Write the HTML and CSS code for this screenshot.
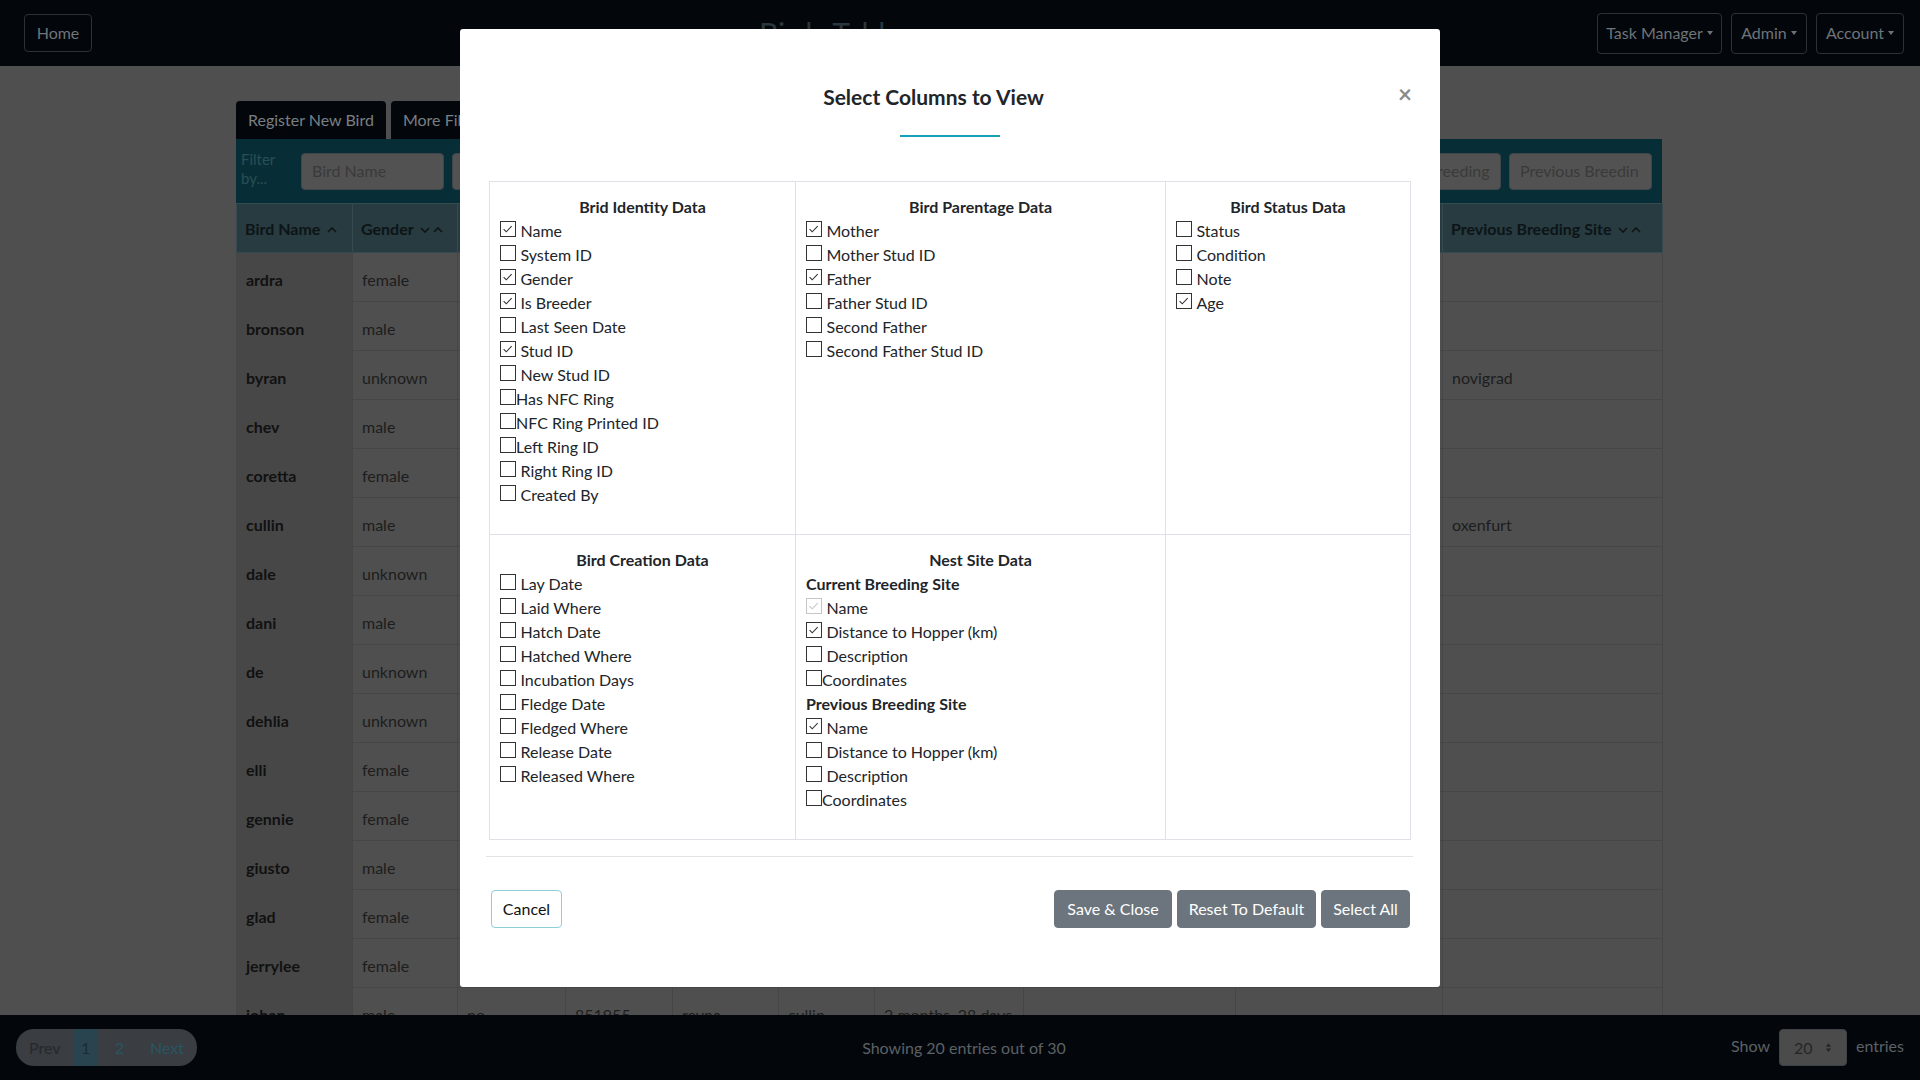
FILE: index.html
```html
<!DOCTYPE html>
<html lang="en">
<head>
<meta charset="utf-8">
<title>Birds Table</title>
<link rel="stylesheet" href="styles.css">
</head>
<body>
<header class="navbar">
  <button class="nav-btn home">Home</button>
  <div class="brand">Birds Table</div>
  <div class="nav-right">
    <button class="nav-btn w-task">Task Manager<span class="caret"></span></button>
    <button class="nav-btn w-admin">Admin<span class="caret"></span></button>
    <button class="nav-btn w-acct">Account<span class="caret"></span></button>
  </div>
</header>

<main class="main">
  <div class="tabs">
    <div class="tab">Register New Bird</div>
    <div class="tab">More Filters</div>
  </div>
  <div class="filters">
    <div class="filter-label">Filter by...</div>
    <div class="finput">Bird Name</div>
    <div class="finput">Gender</div>
    <div class="finput">Is Breeder</div>
    <div class="finput">Stud ID</div>
    <div class="finput">Mother</div>
    <div class="finput">Father</div>
    <div class="finput">Age</div>
    <div class="finput">Current Breeding</div>
    <div class="finput">Previous Breedin</div>
  </div>
  <table class="grid">
    <colgroup>
      <col style="width:116px"><col style="width:105px"><col style="width:108px"><col style="width:107px"><col style="width:106px"><col style="width:96px"><col style="width:149px"><col style="width:212px"><col style="width:207px"><col style="width:220px">
    </colgroup>
    <thead>
      <tr>
        <th>Bird Name <svg class="chev" viewBox="0 0 10 6"><path d="M1 5l4-4 4 4"/></svg></th>
        <th>Gender <svg class="chev" viewBox="0 0 10 6"><path d="M1 1l4 4 4-4"/></svg><svg class="chev" viewBox="0 0 10 6"><path d="M1 5l4-4 4 4"/></svg></th>
        <th>Is Breeder</th>
        <th>Stud ID</th>
        <th>Mother</th>
        <th>Father</th>
        <th>Age</th>
        <th>Current Breeding Site</th>
        <th>Distance to Hopper</th>
        <th>Previous Breeding Site <svg class="chev" viewBox="0 0 10 6"><path d="M1 1l4 4 4-4"/></svg><svg class="chev" viewBox="0 0 10 6"><path d="M1 5l4-4 4 4"/></svg></th>
      </tr>
    </thead>
    <tbody>
      <tr><td class="first">ardra</td><td>female</td><td></td><td></td><td></td><td></td><td></td><td></td><td></td><td></td></tr>
      <tr><td class="first">bronson</td><td>male</td><td></td><td></td><td></td><td></td><td></td><td></td><td></td><td></td></tr>
      <tr><td class="first">byran</td><td>unknown</td><td></td><td></td><td></td><td></td><td></td><td></td><td></td><td>novigrad</td></tr>
      <tr><td class="first">chev</td><td>male</td><td></td><td></td><td></td><td></td><td></td><td></td><td></td><td></td></tr>
      <tr><td class="first">coretta</td><td>female</td><td></td><td></td><td></td><td></td><td></td><td></td><td></td><td></td></tr>
      <tr><td class="first">cullin</td><td>male</td><td></td><td></td><td></td><td></td><td></td><td></td><td></td><td>oxenfurt</td></tr>
      <tr><td class="first">dale</td><td>unknown</td><td></td><td></td><td></td><td></td><td></td><td></td><td></td><td></td></tr>
      <tr><td class="first">dani</td><td>male</td><td></td><td></td><td></td><td></td><td></td><td></td><td></td><td></td></tr>
      <tr><td class="first">de</td><td>unknown</td><td></td><td></td><td></td><td></td><td></td><td></td><td></td><td></td></tr>
      <tr><td class="first">dehlia</td><td>unknown</td><td></td><td></td><td></td><td></td><td></td><td></td><td></td><td></td></tr>
      <tr><td class="first">elli</td><td>female</td><td></td><td></td><td></td><td></td><td></td><td></td><td></td><td></td></tr>
      <tr><td class="first">gennie</td><td>female</td><td></td><td></td><td></td><td></td><td></td><td></td><td></td><td></td></tr>
      <tr><td class="first">giusto</td><td>male</td><td></td><td></td><td></td><td></td><td></td><td></td><td></td><td></td></tr>
      <tr><td class="first">glad</td><td>female</td><td></td><td></td><td></td><td></td><td></td><td></td><td></td><td></td></tr>
      <tr><td class="first">jerrylee</td><td>female</td><td></td><td></td><td></td><td></td><td></td><td></td><td></td><td></td></tr>
      <tr><td class="first">johan</td><td>male</td><td>no</td><td>851955</td><td>reyna</td><td>cullin</td><td>2 months, 28 days</td><td></td><td></td><td></td></tr>
    </tbody>
  </table>
</main>

<footer class="footer">
  <div class="pager">
    <span class="pg dim">Prev</span>
    <span class="pg active">1</span>
    <span class="pg link two">2</span>
    <span class="pg link">Next</span>
  </div>
  <div class="showing">Showing 20 entries out of 30</div>
  <div class="per-page">
    <span>Show</span>
    <span class="sel">20 <svg class="updown" viewBox="0 0 8 12"><path d="M4 1l3 4H1z M4 11l3-4H1z"/></svg></span>
    <span>entries</span>
  </div>
</footer>

<div class="modal">
  <div class="m-head">
    <h5 class="m-title">Select Columns to View</h5>
    <button class="close">×</button>
  </div>
  <div class="m-underline"></div>

  <div class="cols">
    <div class="cell">
      <div class="c-head">Brid Identity Data</div>
      <div class="opt"><span class="cb on"><svg viewBox="0 0 16 16"><path d="M3 8.2l3 3 6.2-6.6"/></svg></span><span class="t">Name</span></div>
      <div class="opt"><span class="cb"></span><span class="t">System ID</span></div>
      <div class="opt"><span class="cb on"><svg viewBox="0 0 16 16"><path d="M3 8.2l3 3 6.2-6.6"/></svg></span><span class="t">Gender</span></div>
      <div class="opt"><span class="cb on"><svg viewBox="0 0 16 16"><path d="M3 8.2l3 3 6.2-6.6"/></svg></span><span class="t">Is Breeder</span></div>
      <div class="opt"><span class="cb"></span><span class="t">Last Seen Date</span></div>
      <div class="opt"><span class="cb on"><svg viewBox="0 0 16 16"><path d="M3 8.2l3 3 6.2-6.6"/></svg></span><span class="t">Stud ID</span></div>
      <div class="opt"><span class="cb"></span><span class="t">New Stud ID</span></div>
      <div class="opt tight"><span class="cb"></span><span class="t">Has NFC Ring</span></div>
      <div class="opt tight"><span class="cb"></span><span class="t">NFC Ring Printed ID</span></div>
      <div class="opt tight"><span class="cb"></span><span class="t">Left Ring ID</span></div>
      <div class="opt"><span class="cb"></span><span class="t">Right Ring ID</span></div>
      <div class="opt"><span class="cb"></span><span class="t">Created By</span></div>
    </div>
    <div class="cell">
      <div class="c-head">Bird Parentage Data</div>
      <div class="opt"><span class="cb on"><svg viewBox="0 0 16 16"><path d="M3 8.2l3 3 6.2-6.6"/></svg></span><span class="t">Mother</span></div>
      <div class="opt"><span class="cb"></span><span class="t">Mother Stud ID</span></div>
      <div class="opt"><span class="cb on"><svg viewBox="0 0 16 16"><path d="M3 8.2l3 3 6.2-6.6"/></svg></span><span class="t">Father</span></div>
      <div class="opt"><span class="cb"></span><span class="t">Father Stud ID</span></div>
      <div class="opt"><span class="cb"></span><span class="t">Second Father</span></div>
      <div class="opt"><span class="cb"></span><span class="t">Second Father Stud ID</span></div>
    </div>
    <div class="cell">
      <div class="c-head">Bird Status Data</div>
      <div class="opt"><span class="cb"></span><span class="t">Status</span></div>
      <div class="opt"><span class="cb"></span><span class="t">Condition</span></div>
      <div class="opt"><span class="cb"></span><span class="t">Note</span></div>
      <div class="opt"><span class="cb on"><svg viewBox="0 0 16 16"><path d="M3 8.2l3 3 6.2-6.6"/></svg></span><span class="t">Age</span></div>
    </div>

    <div class="cell">
      <div class="c-head">Bird Creation Data</div>
      <div class="opt"><span class="cb"></span><span class="t">Lay Date</span></div>
      <div class="opt"><span class="cb"></span><span class="t">Laid Where</span></div>
      <div class="opt"><span class="cb"></span><span class="t">Hatch Date</span></div>
      <div class="opt"><span class="cb"></span><span class="t">Hatched Where</span></div>
      <div class="opt"><span class="cb"></span><span class="t">Incubation Days</span></div>
      <div class="opt"><span class="cb"></span><span class="t">Fledge Date</span></div>
      <div class="opt"><span class="cb"></span><span class="t">Fledged Where</span></div>
      <div class="opt"><span class="cb"></span><span class="t">Release Date</span></div>
      <div class="opt"><span class="cb"></span><span class="t">Released Where</span></div>
    </div>
    <div class="cell">
      <div class="c-head">Nest Site Data</div>
      <div class="sub-head">Current Breeding Site</div>
      <div class="opt"><span class="cb on disabled"><svg viewBox="0 0 16 16"><path d="M3 8.2l3 3 6.2-6.6"/></svg></span><span class="t">Name</span></div>
      <div class="opt"><span class="cb on"><svg viewBox="0 0 16 16"><path d="M3 8.2l3 3 6.2-6.6"/></svg></span><span class="t">Distance to Hopper (km)</span></div>
      <div class="opt"><span class="cb"></span><span class="t">Description</span></div>
      <div class="opt tight"><span class="cb"></span><span class="t">Coordinates</span></div>
      <div class="sub-head">Previous Breeding Site</div>
      <div class="opt"><span class="cb on"><svg viewBox="0 0 16 16"><path d="M3 8.2l3 3 6.2-6.6"/></svg></span><span class="t">Name</span></div>
      <div class="opt"><span class="cb"></span><span class="t">Distance to Hopper (km)</span></div>
      <div class="opt"><span class="cb"></span><span class="t">Description</span></div>
      <div class="opt tight"><span class="cb"></span><span class="t">Coordinates</span></div>
    </div>
    <div class="cell"></div>
  </div>

  <hr class="m-rule">
  <div class="m-foot">
    <button class="btn btn-cancel">Cancel</button>
    <div class="btn-group">
      <button class="btn btn-sec b-save">Save &amp; Close</button>
      <button class="btn btn-sec b-reset">Reset To Default</button>
      <button class="btn btn-sec b-all">Select All</button>
    </div>
  </div>
</div>
</body>
</html>
```

FILE: styles.css
```css
* { box-sizing: border-box; margin: 0; padding: 0; }
html, body { height: 100%; }
body {
  background: #4f4f4f;
  font-family: Lato, "Open Sans", sans-serif;
  font-size: 16px;
  line-height: 1.5;
  color: #212529;
  overflow: hidden;
}
button { font: inherit; cursor: pointer; }

/* navbar */
.navbar {
  height: 66px;
  background: #03070b;
  display: flex;
  align-items: center;
  padding: 0 16px 0 24px;
}
.nav-btn {
  height: 38px;
  padding: 0 10px;
  border: 1px solid #2a3237;
  border-radius: 4px;
  background: transparent;
  color: #6e7479;
  display: flex;
  align-items: center;
  justify-content: center;
}
.home { width: 68px; }
.brand {
  margin-left: 667px;
  font-size: 30px;
  line-height: 36px;
  color: #2a363d;
}
.nav-right { margin-left: auto; display: flex; gap: 9px; }
.nav-right .nav-btn { height: 41px; padding: 0; }
.w-task { width: 125px; }
.w-admin { width: 76px; }
.w-acct { width: 88px; }
.caret {
  display: inline-block;
  margin-left: 4px;
  border-top: 4px solid #6e7479;
  border-left: 3.5px solid transparent;
  border-right: 3.5px solid transparent;
}

/* main */
.main { margin-left: 236px; width: 1426px; padding-top: 35px; }
.tabs { display: flex; gap: 5px; height: 38px; }
.tab {
  background: #03070b;
  color: #7a7f84;
  border-radius: 4px 4px 0 0;
  padding: 0 12px;
  display: flex;
  align-items: center;
}
.filters {
  height: 64px;
  background: #072e36;
  display: flex;
  align-items: center;
  gap: 8px;
  padding-left: 5px;
}
.filter-label {
  width: 52px;
  font-size: 15px;
  line-height: 19px;
  color: #2a4f56;
  margin-top: -4px;
}
.finput {
  width: 143px;
  flex: none;
  height: 37px;
  background: #525252;
  border: 1px solid #3f4548;
  border-radius: 4px;
  padding: 0 10px;
  color: #3a3a3a;
  display: flex;
  align-items: center;
  white-space: nowrap;
  overflow: hidden;
}

.grid { border-collapse: collapse; table-layout: fixed; width: 1426px; }
.grid th {
  height: 49px;
  background: #273b40;
  color: #0d1416;
  font-weight: 700;
  text-align: left;
  padding: 2px 8px 0;
  border: 1px solid #344a4f;
  white-space: nowrap;
}
.chev { width: 10px; height: 6px; margin-left: 3px; vertical-align: 2px; }
.chev path { fill: none; stroke: #0d1416; stroke-width: 1.6; }
.grid td {
  height: 49px;
  padding: 15px 9px 0;
  vertical-align: top;
  border: 1px solid #464646;
  color: #1d1d1d;
  white-space: nowrap;
  overflow: hidden;
}
.grid td.first { background: #474747; font-weight: 700; color: #111; }

/* footer */
.footer {
  position: fixed;
  left: 0; right: 0; bottom: 0;
  height: 65px;
  background: #03070b;
  display: flex;
  align-items: center;
  padding: 0 16px;
}
.pager {
  height: 37px;
  width: 181px;
  background: #3a3d41;
  border-radius: 18px;
  display: flex;
  align-items: stretch;
  padding-left: 13px;
}
.pg { display: flex; align-items: center; padding: 0 13px; }
.pg.dim { color: #25292c; padding-left: 0; }
.pg.active { background: #29444e; color: #1a2d33; width: 32px; padding: 0; justify-content: center; }
.pg.link { color: #285662; }
.pg.two { padding-left: 17px; }
.showing { flex: 1; text-align: center; color: #5b6166; }
.per-page { display: flex; align-items: center; gap: 9px; color: #5b6166; }
.per-page span:first-child { margin-top: -4px; }
.per-page span:last-child { margin-top: -4px; }
.sel {
  width: 68px;
  height: 37px;
  background: #4b4b4b;
  border: 1px solid #3d4246;
  border-radius: 4px;
  color: #262626;
  display: flex;
  align-items: center;
  padding-left: 14px;
  gap: 12px;
}
.updown { width: 7px; height: 11px; }
.updown path { fill: #262626; }

/* modal */
.modal {
  position: fixed;
  top: 29px;
  left: 460px;
  width: 980px;
  height: 958px;
  background: #fff;
  border-radius: 3px;
  padding: 0 29px;
}
.m-head { display: flex; align-items: center; padding-top: 52px; }
.m-title {
  flex: 1;
  text-align: center;
  font-size: 21px;
  font-weight: 700;
  line-height: 31px;
  color: #212529;
}
.close {
  width: 34px;
  border: 0;
  background: transparent;
  text-align: right;
  font-size: 24px;
  font-weight: 700;
  line-height: 24px;
  color: #8a8a8a;
  margin-top: -6px;
  margin-right: -1px;
}
.m-underline {
  width: 100px;
  height: 2px;
  background: #17a2b8;
  margin: 23px auto 0;
}

.cols {
  margin-top: 44px;
  width: 922px;
  display: grid;
  grid-template-columns: 306px 370px 245px;
  border-left: 1px solid #dee2e6;
  border-top: 1px solid #dee2e6;
}
.cell {
  border-right: 1px solid #dee2e6;
  border-bottom: 1px solid #dee2e6;
  padding: 13px 10px 27px 10px;
}
.c-head { text-align: center; font-weight: 700; line-height: 24px; }
.sub-head { font-weight: 700; line-height: 24px; }
.opt { display: flex; align-items: flex-start; height: 24px; line-height: 24px; white-space: nowrap; }
.opt .t { margin-left: 4.5px; }
.opt.tight .t { margin-left: 0; }
.cb {
  flex: none;
  width: 16px;
  height: 16px;
  margin-top: 2px;
  border: 1px solid #333;
  background: #fff;
  display: block;
}
.cb svg { display: block; width: 14px; height: 14px; }
.cb svg path { fill: none; stroke: #333; stroke-width: 1.2; }
.cb.disabled { border-color: #c6c6c6; }
.cb.disabled svg path { stroke: #c6c6c6; }

.m-rule {
  border: 0;
  border-top: 1px solid #e3e3e3;
  width: 927px;
  margin: 16px 0 0 -3px;
}
.m-foot {
  margin-top: 33px;
  display: flex;
  justify-content: space-between;
  padding-left: 2px;
}
.btn {
  height: 38px;
  border-radius: 4px;
  font-size: 16px;
  text-align: center;
  white-space: nowrap;
}
.btn-cancel {
  width: 71px;
  background: #fff;
  border: 1px solid #8fcfd9;
  color: #111;
}
.btn-group { display: flex; gap: 5px; margin-right: 1px; }
.btn-sec { background: #6c757d; border: 1px solid #6c757d; color: #fff; }
.b-save { width: 118px; }
.b-reset { width: 139px; }
.b-all { width: 89px; }
```
